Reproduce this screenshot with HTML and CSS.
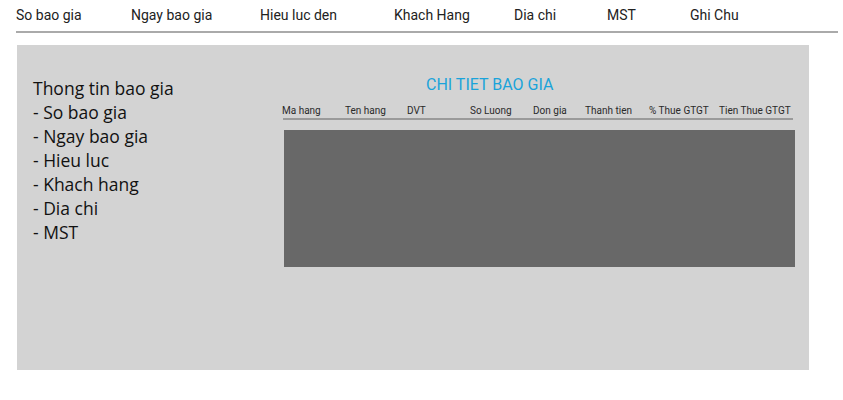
FILE: index.html
```html
<!DOCTYPE html>
<html>
<head>
<meta charset="utf-8">
<link rel="stylesheet" href="styles.css">
</head>
<body>
<nav class="nav">
  <span>So bao gia</span>
  <span>Ngay bao gia</span>
  <span>Hieu luc den</span>
  <span>Khach Hang</span>
  <span>Dia chi</span>
  <span>MST</span>
  <span>Ghi Chu</span>
</nav>
<section class="panel">
  <div class="info">
    <div>Thong tin bao gia</div>
    <div>- So bao gia</div>
    <div>- Ngay bao gia</div>
    <div>- Hieu luc</div>
    <div>- Khach hang</div>
    <div>- Dia chi</div>
    <div>- MST</div>
  </div>
  <div class="detail">
    <h2 class="title">CHI TIET BAO GIA</h2>
    <div class="thead">
      <span>Ma hang</span>
      <span>Ten hang</span>
      <span>DVT</span>
      <span>So Luong</span>
      <span>Don gia</span>
      <span>Thanh tien</span>
      <span>% Thue GTGT</span>
      <span>Tien Thue GTGT</span>
    </div>
    <div class="tbody"></div>
  </div>
</section>
</body>
</html>
```
FILE: styles.css
```css
html, body {
  margin: 0;
  padding: 0;
  background: #fff;
}
body {
  font-family: Roboto, "Liberation Sans", sans-serif;
  color: #222;
}
.nav {
  display: grid;
  grid-template-columns: 115px 129px 134px 120px 93px 83px 1fr;
  margin: 0 5px 0 16px;
  height: 31px;
  border-bottom: 2px solid #aaaaaa;
  font-size: 14px;
  line-height: 30px;
}
.panel {
  display: flex;
  margin: 12px 0 0 17px;
  width: 792px;
  height: 325px;
  background: #d3d3d3;
}
.info {
  width: 250px;
  padding: 31px 0 0 16px;
  font-family: "Open Sans", sans-serif;
  font-size: 17.5px;
  line-height: 24px;
  color: #111;
}
.detail {
  flex: 1;
  padding: 30px 14px 0 0;
  display: flex;
  flex-direction: column;
}
.title {
  margin: 0;
  padding-left: 143px;
  font-size: 16px;
  font-weight: 400;
  line-height: 20px;
  color: #1aa3da;
}
.thead {
  display: grid;
  grid-template-columns: 62px 62px 63px 63px 52px 64px 70px 1fr;
  margin: 9px 2px 0 0;
  padding-left: 0;
  font-size: 10px;
  line-height: 14px;
  color: #2a2a2a;
  border-bottom: 2px solid #9a9a9a;
  white-space: nowrap;
}
.thead span:first-child {
  margin-left: -1px;
}
.tbody {
  margin: 10px 0 0 1px;
  height: 137px;
  background: #686868;
}
```
